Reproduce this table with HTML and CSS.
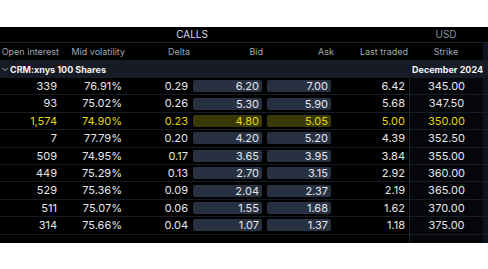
FILE: index.html
```html
<!DOCTYPE html>
<html>
<head>
<meta charset="utf-8">
<link rel="stylesheet" href="styles.css">
</head>
<body>
<div class="chain">
  <div class="title-row">
    <div class="calls">CALLS</div>
    <div class="usd">USD</div>
    <div class="strip"></div>
  </div>
  <div class="row head">
    <div class="c c1">Open interest</div>
    <div class="c c2">Mid volatility</div>
    <div class="c c3">Delta</div>
    <div class="c c4">Bid</div>
    <div class="c c5">Ask</div>
    <div class="c c6">Last traded</div>
    <div class="c c7">Strike</div>
    <div class="c c8"></div>
  </div>
  <div class="group">
    <div class="sym"><svg class="chev" width="6" height="5" viewBox="0 0 6 5"><path d="M0.5 1.2 L3 3.7 L5.5 1.2" fill="none" stroke="#c8ccd2" stroke-width="0.9"/></svg>CRM:xnys 100 Shares</div>
    <div class="month">December 2024</div>
  </div>

  <div class="row data"><div class="c c1">339</div><div class="c c2">76.91%</div><div class="c c3">0.29</div><div class="c c4"><span class="box bid">6.20</span></div><div class="c c5"><span class="box ask">7.00</span></div><div class="c c6">6.42</div><div class="c c7">345.00</div><div class="c c8"></div></div>
  <div class="row data"><div class="c c1">93</div><div class="c c2">75.02%</div><div class="c c3">0.26</div><div class="c c4"><span class="box bid">5.30</span></div><div class="c c5"><span class="box ask">5.90</span></div><div class="c c6">5.68</div><div class="c c7">347.50</div><div class="c c8"></div></div>
  <div class="row data atm"><div class="c c1">1,574</div><div class="c c2">74.90%</div><div class="c c3">0.23</div><div class="c c4"><span class="box bid">4.80</span></div><div class="c c5"><span class="box ask">5.05</span></div><div class="c c6">5.00</div><div class="c c7">350.00</div><div class="c c8"></div></div>
  <div class="row data"><div class="c c1">7</div><div class="c c2">77.79%</div><div class="c c3">0.20</div><div class="c c4"><span class="box bid">4.20</span></div><div class="c c5"><span class="box ask">5.20</span></div><div class="c c6">4.39</div><div class="c c7">352.50</div><div class="c c8"></div></div>
  <div class="row data"><div class="c c1">509</div><div class="c c2">74.95%</div><div class="c c3">0.17</div><div class="c c4"><span class="box bid">3.65</span></div><div class="c c5"><span class="box ask">3.95</span></div><div class="c c6">3.84</div><div class="c c7">355.00</div><div class="c c8"></div></div>
  <div class="row data"><div class="c c1">449</div><div class="c c2">75.29%</div><div class="c c3">0.13</div><div class="c c4"><span class="box bid">2.70</span></div><div class="c c5"><span class="box ask">3.15</span></div><div class="c c6">2.92</div><div class="c c7">360.00</div><div class="c c8"></div></div>
  <div class="row data"><div class="c c1">529</div><div class="c c2">75.36%</div><div class="c c3">0.09</div><div class="c c4"><span class="box bid">2.04</span></div><div class="c c5"><span class="box ask">2.37</span></div><div class="c c6">2.19</div><div class="c c7">365.00</div><div class="c c8"></div></div>
  <div class="row data"><div class="c c1">511</div><div class="c c2">75.07%</div><div class="c c3">0.06</div><div class="c c4"><span class="box bid">1.55</span></div><div class="c c5"><span class="box ask">1.68</span></div><div class="c c6">1.62</div><div class="c c7">370.00</div><div class="c c8"></div></div>
  <div class="row data"><div class="c c1">314</div><div class="c c2">75.66%</div><div class="c c3">0.04</div><div class="c c4"><span class="box bid">1.07</span></div><div class="c c5"><span class="box ask">1.37</span></div><div class="c c6">1.18</div><div class="c c7">375.00</div><div class="c c8"></div></div>
  <div class="foot"><div class="foot-main"></div><div class="foot-strike"></div><div class="foot-strip"></div></div>
</div>
</body>
</html>
```

FILE: styles.css
```css
html, body {
  margin: 0;
  padding: 0;
  background: #ffffff;
}
body {
  padding-top: 27px;
  font-family: Inter, "Liberation Sans", sans-serif;
}
.chain {
  width: 488px;
  background: #000000;
  color: #e6e7ea;
}
.title-row {
  display: grid;
  grid-template-columns: 409px 74px 5px;
  height: 15px;
  border-bottom: 1px solid #1c212b;
  font-size: 10px;
  line-height: 15px;
}
.calls {
  text-align: center;
  padding-right: 25px;
  color: #d9dbe0;
}
.usd {
  text-align: center;
  color: #8b9099;
}
.row {
  display: grid;
  grid-template-columns: 62px 66px 65px 74px 69px 73px 74px 5px;
}
.head {
  height: 17px;
  font-size: 9px;
  line-height: 17px;
  color: #a3a7af;
  white-space: nowrap;
}
.head .c { text-align: right; padding-right: 3px; }
.head .c4 { padding-right: 4px; }
.head .c5 { padding-right: 2px; }
.head .c6 { padding-right: 1px; }
.head .c7 { text-align: center; padding-right: 0; }
.head .c8 { padding: 0; }
.group {
  display: flex;
  justify-content: space-between;
  align-items: center;
  height: 18px;
  background: #161b26;
  font-size: 9px;
  font-weight: 700;
  color: #f2f3f5;
  white-space: nowrap;
}
.sym {
  display: flex;
  align-items: center;
}
.chev {
  margin: 0 2px 0 2px;
}
.month {
  padding-right: 5px;
}
.data {
  height: 16.4px;
  border-bottom: 1px solid #181c24;
  font-size: 11px;
  line-height: 16.4px;
}
.data .c { text-align: right; white-space: nowrap; }
.data .c1 { padding-right: 5px; }
.data .c2 { padding-right: 6px; }
.data .c3 { padding-right: 5px; }
.data .c4, .data .c5 {
  text-align: left;
  display: flex;
  align-items: center;
}
.data .c6 { padding-right: 4px; }
.data .c7 {
  text-align: center;
  border-left: 1px solid #1c212b;
  background: #04060a;
}
.data .c8, .head .c8 {
  background: #0c1322;
}
.box {
  display: block;
  height: 12px;
  line-height: 12px;
  border-radius: 2px;
  background: #283142;
  text-align: right;
  padding-right: 3px;
  box-sizing: border-box;
}
.bid { width: 69px; }
.ask { width: 64px; }
.atm { color: #e3d90a; }
.atm .box { background: #393a07; }
.foot {
  display: grid;
  grid-template-columns: 409px 74px 5px;
  height: 8px;
}
.foot-strike {
  border-left: 1px solid #1c212b;
  background: #04060a;
}
.foot-strip { background: #0c1322; }
```
